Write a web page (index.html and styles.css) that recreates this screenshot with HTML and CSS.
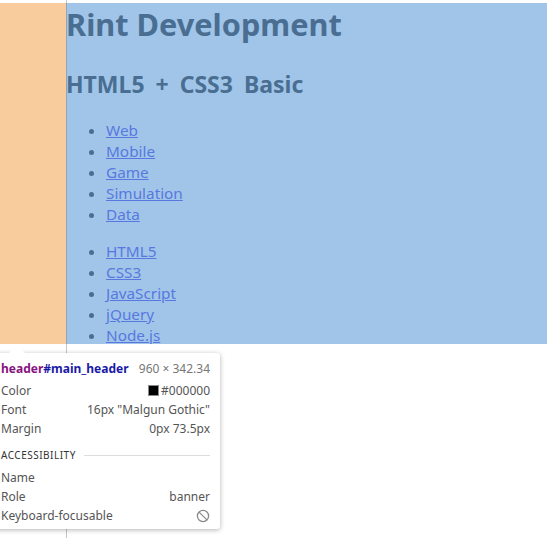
FILE: index.html
```html
<!DOCTYPE html>
<html>
<head>
<meta charset="utf-8">
<link rel="stylesheet" href="styles.css">
</head>
<body>
<div class="page">
  <div class="highlight">
    <div class="margin-box"></div>
    <header class="main-header" id="main_header">
      <h1 class="title">Rint Development</h1>
      <h2 class="subtitle">HTML5 + CSS3 Basic</h2>
      <ul class="menu">
        <li><a href="#">Web</a></li>
        <li><a href="#">Mobile</a></li>
        <li><a href="#">Game</a></li>
        <li><a href="#">Simulation</a></li>
        <li><a href="#">Data</a></li>
      </ul>
      <ul class="menu">
        <li><a href="#">HTML5</a></li>
        <li><a href="#">CSS3</a></li>
        <li><a href="#">JavaScript</a></li>
        <li><a href="#">jQuery</a></li>
        <li><a href="#">Node.js</a></li>
      </ul>
    </header>
  </div>
  <div class="guide"></div>
  <div class="tooltip">
    <div class="arrow"></div>
    <div class="tip-title">
      <span class="tag"><span class="tag-name">header</span><span class="tag-id">#main_header</span></span>
      <span class="dims">960 × 342.34</span>
    </div>
    <div class="rows">
      <div class="row"><span class="label">Color</span><span class="value"><span class="swatch"></span>#000000</span></div>
      <div class="row"><span class="label">Font</span><span class="value">16px "Malgun Gothic"</span></div>
      <div class="row"><span class="label">Margin</span><span class="value">0px 73.5px</span></div>
    </div>
    <div class="section"><span class="section-name">ACCESSIBILITY</span><span class="section-line"></span></div>
    <div class="rows">
      <div class="row"><span class="label">Name</span><span class="value"></span></div>
      <div class="row"><span class="label">Role</span><span class="value">banner</span></div>
      <div class="row"><span class="label">Keyboard-focusable</span><span class="value">
        <svg class="no-icon" width="14" height="14" viewBox="0 0 14 14"><circle cx="7" cy="7" r="5.6" fill="none" stroke="#8a8a8a" stroke-width="1.3"/><line x1="3.1" y1="3.1" x2="10.9" y2="10.9" stroke="#8a8a8a" stroke-width="1.3"/></svg>
      </span></div>
    </div>
  </div>
</div>
</body>
</html>
```

FILE: styles.css
```css
html, body {
  margin: 0;
  padding: 0;
  background: #ffffff;
}
body {
  width: 547px;
  height: 538px;
  overflow: hidden;
}
.page {
  position: relative;
  width: 547px;
  height: 538px;
  padding-top: 3px;
  box-sizing: border-box;
}
.highlight {
  display: flex;
  height: 341px;
}
.margin-box {
  width: 66px;
  flex: none;
  background: #f9cc9e;
}
.main-header {
  flex: 1;
  background: #a0c5e8;
  font-family: "Noto Sans", "Open Sans", sans-serif;
  color: #4a6e91;
  overflow: hidden;
}
.title {
  margin: 0 0 23px 0;
  font-size: 30.7px;
  line-height: 42px;
  font-weight: bold;
}
.subtitle {
  margin: 0 0 20px 0;
  font-size: 23px;
  line-height: 32px;
  font-weight: bold;
  word-spacing: 5px;
}
.menu {
  margin: 0 0 16px 0;
  padding-left: 40px;
  font-size: 15.3px;
  line-height: 21px;
}
.menu:last-child {
  margin-bottom: 0;
}
.menu a {
  color: #5878e0;
}
.guide {
  position: absolute;
  left: 66px;
  top: 0;
  width: 1px;
  height: 538px;
  background: rgba(120, 130, 140, 0.45);
}
.tooltip {
  position: absolute;
  left: -9px;
  top: 353px;
  width: 229px;
  height: 176px;
  box-sizing: border-box;
  padding: 6px 10px 0 10px;
  background: #ffffff;
  border-radius: 3px;
  box-shadow: 0 1px 5px rgba(0, 0, 0, 0.3);
  font-family: "Noto Sans", sans-serif;
  font-size: 12px;
  color: #555555;
}
.arrow {
  position: absolute;
  left: 18px;
  top: -8px;
  width: 0;
  height: 0;
  border-left: 8px solid transparent;
  border-right: 8px solid transparent;
  border-bottom: 8px solid #ffffff;
}
.tip-title {
  display: flex;
  justify-content: space-between;
  align-items: center;
  height: 19px;
  margin-bottom: 3px;
}
.tag {
  font-weight: bold;
}
.tag-name {
  color: #881280;
}
.tag-id {
  color: #1a1aa6;
}
.dims {
  color: #777777;
}
.row {
  display: flex;
  justify-content: space-between;
  align-items: center;
  height: 19px;
}
.label {
  color: #555555;
}
.value {
  display: flex;
  align-items: center;
  color: #555555;
}
.swatch {
  width: 9px;
  height: 9px;
  background: #000000;
  border: 1px solid #888888;
  margin-right: 2px;
}
.section {
  display: flex;
  align-items: center;
  gap: 8px;
  height: 16px;
  margin: 9px 0 5px 0;
}
.section-name {
  font-size: 10px;
  letter-spacing: 0.5px;
  color: #333333;
}
.section-line {
  flex: 1;
  height: 1px;
  background: #dddddd;
}
.no-icon {
  display: block;
}
```
